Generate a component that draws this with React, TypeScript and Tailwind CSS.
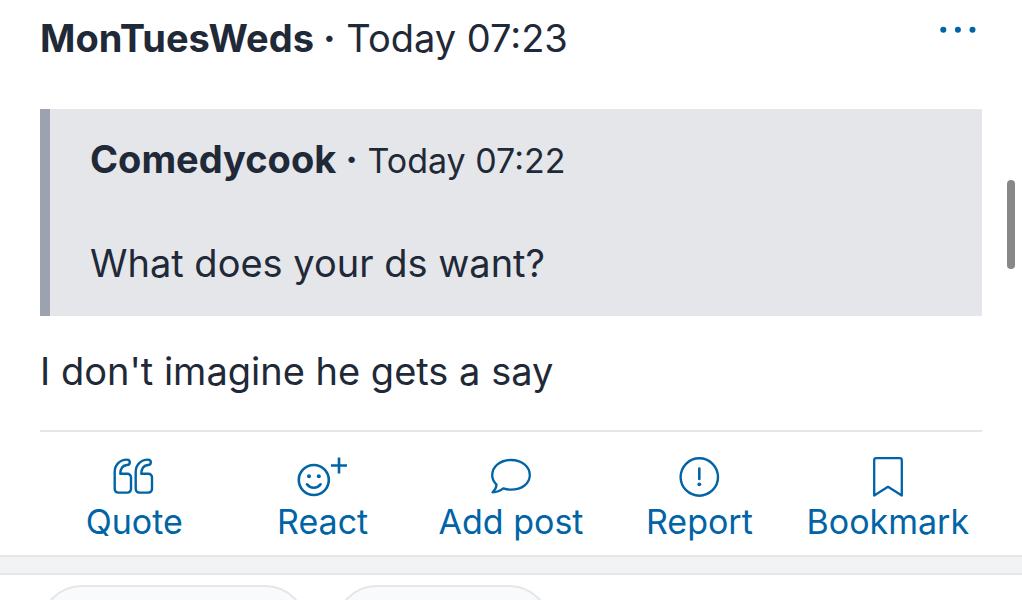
import type { ReactNode } from "react";

function Icon({ children }: { children: ReactNode }) {
  return (
    <svg
      viewBox="0 0 60 48"
      className="h-12 w-[60px]"
      fill="none"
      stroke="currentColor"
      strokeWidth="2.6"
      strokeLinecap="round"
      strokeLinejoin="round"
      aria-hidden="true"
    >
      {children}
    </svg>
  );
}

const quoteMark =
  "M16.3 20.8H23.400a3.600 3.600 0 0 1 3.600 3.600V36a3.600 3.600 0 0 1-3.600 3.600H14.300A3.600 3.600 0 0 1 10.700 36V19c0-7.200 5.200-12.400 12.200-12.400 1.700 0 2.900 1.100 2.900 2.700s-1.200 2.700-2.800 2.700c-4 .3-6.500 3-6.700 8.800Z";

const actions: { label: string; icon: ReactNode }[] = [
  {
    label: "Quote",
    icon: (
      <Icon>
        <g strokeWidth="2.4">
          <path d={quoteMark} />
          <path d={quoteMark} transform="translate(21 0)" />
        </g>
      </Icon>
    ),
  },
  {
    label: "React",
    icon: (
      <Icon>
        <circle cx="20.800" cy="27" r="15" />
        <path d="M14 31.300c3.300 4.500 10.300 4.500 13.600 0" />
        <path d="M46 4.500v16M38 12.500h16" strokeLinecap="butt" />
        <circle cx="16" cy="23.300" r="2" fill="currentColor" stroke="none" />
        <circle cx="25.800" cy="23.300" r="2" fill="currentColor" stroke="none" />
      </Icon>
    ),
  },
  {
    label: "Add post",
    icon: (
      <Icon>
        <path
          strokeWidth="2.300"
          d="M30 7C19 7 11.200 13.800 11.200 22.300c0 3.600 1.700 6.700 4.300 9.300 0 2.900-1.600 5.600-3.900 7.700 4-.2 7.700-1.600 10.700-4 2.500.9 4.900 1.300 7.700 1.300 11 0 18.800-6.200 18.800-14.300C48.800 13.800 41 7 30 7Z"
        />
      </Icon>
    ),
  },
  {
    label: "Report",
    icon: (
      <Icon>
        <circle cx="30.300" cy="24" r="18.700" strokeWidth="2.400" />
        <path d="M30.300 15.500v10.500" />
        <circle cx="30.300" cy="31.300" r="1.900" fill="currentColor" stroke="none" />
      </Icon>
    ),
  },
  {
    label: "Bookmark",
    icon: (
      <Icon>
        <path
          strokeWidth="2.300"
          d="M16.200 42.500V7.200a2 2 0 0 1 2-2h23.600a2 2 0 0 1 2 2v35.300L30 33.800Z"
        />
      </Icon>
    ),
  },
];

export default function App() {
  return (
    <div className="relative flex h-screen flex-col overflow-hidden bg-white font-['Inter',sans-serif] text-[#1f2937]">
      <article className="px-10">
        <header className="flex items-start justify-between pt-3">
          <p className="text-[38px] leading-[52px]">
            <strong className="font-bold">MonTuesWeds ·</strong> Today 07:23
          </p>
          <button type="button" aria-label="More options" className="pt-2 text-[#0064a6]">
            <svg viewBox="0 0 48 20" className="h-5 w-12" fill="currentColor" aria-hidden="true">
              <circle cx="9.300" cy="9.700" r="3" />
              <circle cx="23.900" cy="9.700" r="3" />
              <circle cx="38.500" cy="9.700" r="3" />
            </svg>
          </button>
        </header>

        <blockquote className="mt-[45px] border-l-10 border-[#9ca3af] bg-[#e5e6ea] px-10 pt-6 pb-[27px]">
          <p className="text-[34px] leading-[52px]">
            <strong className="text-[38px] font-bold">Comedycook ·</strong> Today 07:22
          </p>
          <p className="mt-[50px] text-[38px] leading-[52px]">What does your ds want?</p>
        </blockquote>

        <p className="mt-[29px] text-[38px] leading-[52px]">I don't imagine he gets a say</p>

        <div className="mt-[33px] grid grid-cols-5 border-t-2 border-[#e5e6ea] pt-[21px] pb-3">
          {actions.map(({ label, icon }) => (
            <button
              key={label}
              type="button"
              className="flex flex-col items-center text-[34px] leading-[42px] whitespace-nowrap text-[#0064a6]"
            >
              {icon}
              {label}
            </button>
          ))}
        </div>
      </article>

      <div className="h-5 shrink-0 border-y-2 border-[#e5e6ea] bg-[#f2f3f5]" />

      <div className="flex gap-7 px-10 pt-[10px]">
        <div className="h-21 w-[267px] shrink-0 rounded-full border-2 border-[#e5e6ea] bg-gray-50" />
        <div className="h-21 w-[216px] shrink-0 rounded-full border-2 border-[#e5e6ea] bg-gray-50" />
      </div>

      <div className="absolute top-[180px] right-[7px] h-[89px] w-2 rounded-full bg-[#888888]" />
    </div>
  );
}
